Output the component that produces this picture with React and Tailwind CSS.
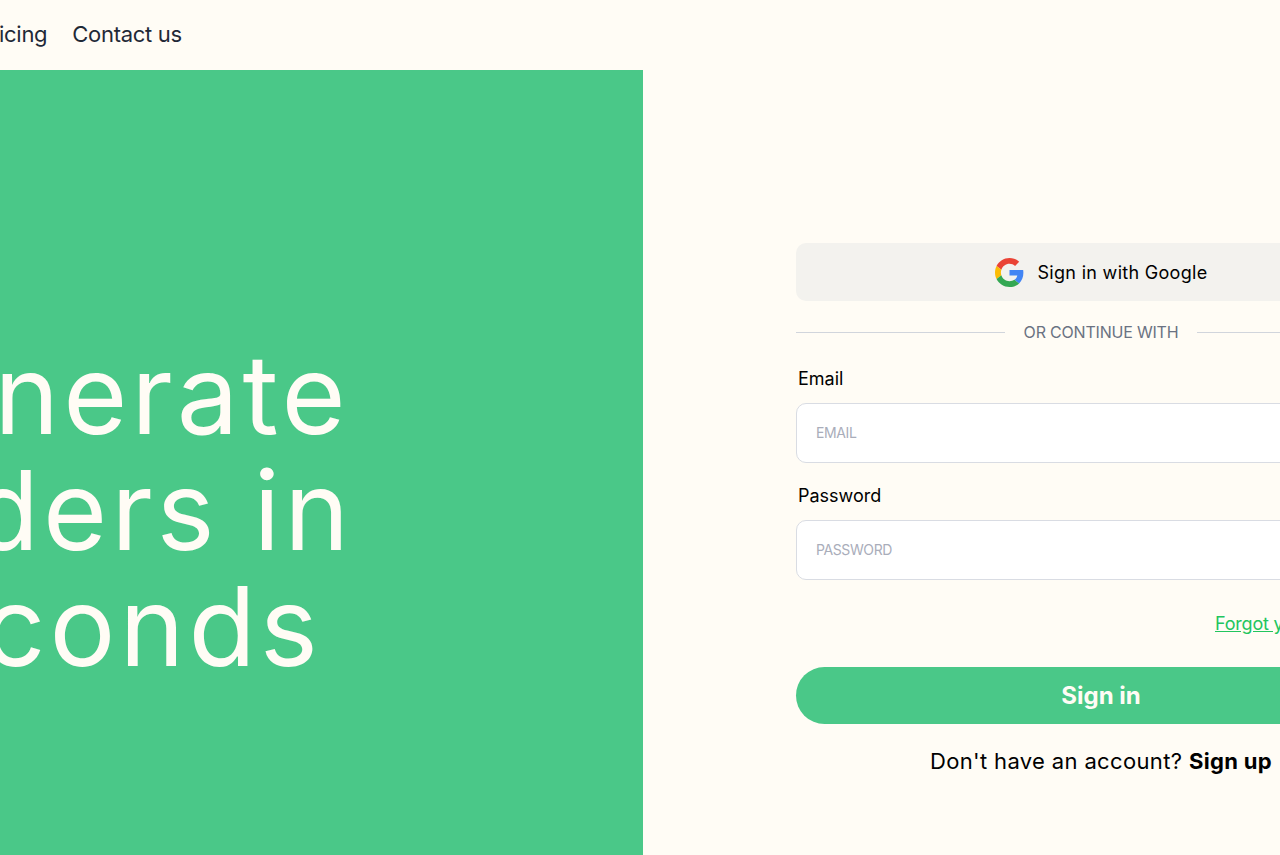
function GoogleIcon() {
  return (
    <svg viewBox="0 0 48 48" className="w-[29px] h-[29px] shrink-0">
      <path fill="#EA4335" d="M24 9.5c3.54 0 6.71 1.22 9.21 3.6l6.85-6.85C35.9 2.38 30.47 0 24 0 14.62 0 6.51 5.38 2.56 13.22l7.98 6.19C12.43 13.72 17.74 9.5 24 9.5z" />
      <path fill="#4285F4" d="M46.98 24.55c0-1.57-.15-3.09-.38-4.55H24v9.02h12.94c-.58 2.96-2.26 5.48-4.78 7.18l7.73 6c4.51-4.18 7.09-10.36 7.09-17.65z" />
      <path fill="#FBBC05" d="M10.53 28.59c-.48-1.45-.76-2.99-.76-4.59s.27-3.14.76-4.59l-7.98-6.19C.92 16.46 0 20.12 0 24c0 3.88.92 7.54 2.56 10.78l7.97-6.19z" />
      <path fill="#34A853" d="M24 48c6.48 0 11.93-2.13 15.89-5.81l-7.73-6c-2.15 1.45-4.92 2.3-8.16 2.3-6.26 0-11.57-4.22-13.47-9.91l-7.98 6.19C6.51 42.62 14.62 48 24 48z" />
    </svg>
  )
}

function Field({ label, placeholder, type }) {
  return (
    <div>
      <label className="block pl-[2px] text-[18px] leading-[24px] text-black">{label}</label>
      <input
        type={type}
        placeholder={placeholder}
        className="mt-[12px] block w-full h-[60px] px-[19px] pb-[2px] bg-white border border-[#d9dce3] rounded-[10px] text-[14px] tracking-[-0.4px] placeholder:text-[#a9adba] outline-none"
      />
    </div>
  )
}

export default function App() {
  return (
    <div className="w-[1280px] h-[855px] overflow-hidden bg-[#fffcf5] font-['Inter',sans-serif]">
      {/* page is scrolled sideways in the screenshot */}
      <div className="w-[1832px] ml-[-273px]">
        {/* Nav */}
        <nav className="h-[70px] flex items-center justify-start pl-[250px] pb-[2px] gap-[25px] text-[22px] tracking-[-0.3px] text-[#1f2937]">
          <a>Pricing</a>
          <a>Contact us</a>
        </nav>

        <div className="grid grid-cols-2 h-[785px]">
          {/* Hero */}
          <div className="bg-[#4ac888] flex items-center pl-[113px] pt-[94px]">
            <h1 className="text-[110px] leading-[116px] font-normal tracking-[4px] text-[#fffcf5]">
              Generate
              <br />
              Orders in
              <br />
              Seconds
            </h1>
          </div>

          {/* Sign in form */}
          <div className="flex justify-center pt-[173px]">
            <div className="w-[610px]">
              <button className="w-full h-[58px] flex items-center justify-center gap-[14px] bg-[#f3f2ee] rounded-[10px] text-[18px] tracking-[0.3px] text-black">
                <GoogleIcon />
                Sign in with Google
              </button>

              <div className="flex items-center gap-[19px] mt-[20px] h-[22px]">
                <div className="flex-1 h-px bg-gray-300" />
                <span className="text-[16px] tracking-[-0.2px] text-gray-500">OR CONTINUE WITH</span>
                <div className="flex-1 h-px bg-gray-300" />
              </div>

              <div className="mt-[24px] flex flex-col gap-[21px]">
                <Field label="Email" placeholder="EMAIL" type="email" />
                <Field label="Password" placeholder="PASSWORD" type="password" />
              </div>

              <div className="mt-[32px] text-right">
                <a className="text-[18px] leading-[24px] tracking-[-0.2px] text-[#22c55e] underline">Forgot your password?</a>
              </div>

              <button className="mt-[31px] w-full h-[57px] pt-[1px] bg-[#4ac888] rounded-full text-[24px] font-bold text-[#fffcf5]">
                Sign in
              </button>

              <p className="mt-[23px] text-center text-[22px] leading-[28px] tracking-[0.35px] text-black">
                Don't have an account? <span className="font-bold">Sign up</span>
              </p>
            </div>
          </div>
        </div>
      </div>
    </div>
  )
}
